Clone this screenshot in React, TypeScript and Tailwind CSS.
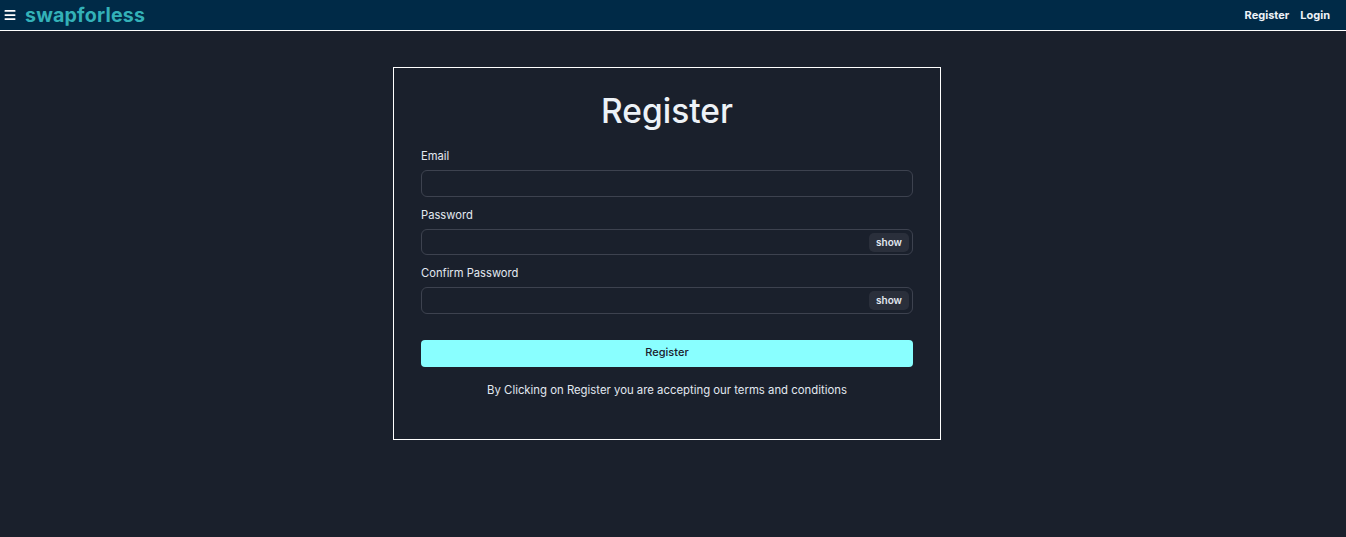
import { Menu } from 'lucide-react';

const sans = "font-['Inter','Open_Sans',sans-serif]";

function Field({ label, showToggle }: { label: string; showToggle?: boolean }) {
  return (
    <div className="flex flex-col">
      <label className="h-[21px] pt-[1px] text-[11.2px] leading-[18px] text-[#e2e8f0]">{label}</label>
      <div className="relative mt-[3px] h-[26.5px] rounded-[6px] border border-[#3d424f]">
        {showToggle ? (
          <button className="absolute right-[3px] top-[3px] h-[19px] w-[40px] rounded-[5px] bg-[#2a2f3b] pb-[1px] text-[10px] font-semibold leading-[18px] text-[#e2e8f0]">
            show
          </button>
        ) : null}
      </div>
    </div>
  );
}

export default function App() {
  return (
    <div className={`${sans} h-[537px] overflow-hidden bg-[#1a202c]`}>
      <header className="flex h-[31px] items-center justify-between border-b border-white bg-[#002a47] pl-[3px] pr-[16px]">
        <div className="flex items-center gap-[8px]">
          <Menu size={14} strokeWidth={3} className="text-white" />
          <span className="text-[19.6px] font-bold leading-[24px] tracking-[0.2px] text-[#33b1b8]">swapforless</span>
        </div>
        <nav className="flex items-center gap-[11px] text-[11px] font-bold text-[#edf2f7]">
          <span>Register</span>
          <span>Login</span>
        </nav>
      </header>

      <main className="flex justify-center pr-[12px] pt-[36px]">
        <section className="h-[373px] w-[548px] border border-white px-[27px] pt-[22px]">
          <h1 className="text-center text-[33.5px] font-medium leading-[42px] text-[#edf2f7]">Register</h1>
          <div className="mt-[14px] flex flex-col gap-[8px]">
            <Field label="Email" />
            <Field label="Password" showToggle />
            <Field label="Confirm Password" showToggle />
          </div>
          <button className="mt-[26px] h-[27px] w-full rounded-[4px] bg-[#89ffff] pb-[2px] text-[11px] font-medium text-[#1a202c]">
            Register
          </button>
          <p className="mt-[14px] text-center text-[11.35px] leading-[18px] text-[#e2e8f0]">
            By Clicking on Register you are accepting our terms and conditions
          </p>
        </section>
      </main>
    </div>
  );
}
